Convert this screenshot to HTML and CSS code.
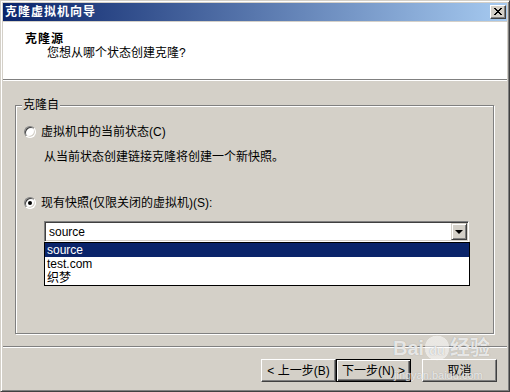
FILE: index.html
```html
<!DOCTYPE html>
<html lang="zh-CN">
<head>
  <meta charset="UTF-8" />
  <title>克隆虚拟机向导</title>
  <link rel="stylesheet" href="styles.css">
</head>
<body>
  <div class="window">
    <!-- Title bar -->
    <div class="titlebar">
      <span class="title">克隆虚拟机向导</span>
      <span class="close-btn">
        <svg width="8" height="7" viewBox="0 0 8 7" shape-rendering="crispEdges">
          <path d="M0 0h2v1H0zM6 0h2v1H6zM1 1h2v1H1zM5 1h2v1H5zM2 2h4v1H2zM3 3h2v1H3zM2 4h4v1H2zM1 5h2v1H1zM5 5h2v1H5zM0 6h2v1H0zM6 6h2v1H6z" fill="#000"/>
        </svg>
      </span>
    </div>

    <div class="client">
      <!-- Header -->
      <div class="header">
        <div class="header-title">克隆源</div>
        <div class="header-sub">您想从哪个状态创建克隆?</div>
      </div>

      <!-- Body -->
      <div class="body">
        <fieldset class="group">
          <legend>克隆自</legend>
          <div class="group-inner">
            <div class="option">
              <span class="radio"></span>
              <span>虚拟机中的当前状态(C)</span>
            </div>
            <div class="desc">从当前状态创建链接克隆将创建一个新快照。</div>
            <div class="option option-2">
              <span class="radio checked"></span>
              <span>现有快照(仅限关闭的虚拟机)(S):</span>
            </div>
            <div class="combo">
              <span class="combo-text">source</span>
              <span class="combo-btn"><span class="arrow"></span></span>
              <ul class="combo-list">
                <li class="selected">source</li>
                <li>test.com</li>
                <li>织梦</li>
              </ul>
            </div>
          </div>
        </fieldset>
      </div>

      <div class="separator"></div>

      <!-- Buttons -->
      <div class="buttons">
        <button class="btn">&lt; 上一步(B)</button>
        <button class="btn default">下一步(N) &gt;</button>
        <button class="btn cancel">取消</button>
      </div>

      <div class="watermark">
        <span class="wm-logo">Bai<span class="wm-paw">du</span>经验</span>
        <span class="wm-url">jingyan.baidu.com</span>
      </div>
    </div>
  </div>
</body>
</html>
```

FILE: styles.css
```css
body {
  margin: 0;
  font-family: "Liberation Sans", "Noto Sans CJK SC", sans-serif;
  font-size: 12px;
  line-height: 14px;
  color: #000;
  background: #d4d0c8;
}
.window {
  position: relative;
  width: 510px;
  height: 392px;
  box-sizing: border-box;
  border: 1px solid;
  border-color: #d4d0c8 #404040 #404040 #d4d0c8;
  box-shadow: inset 1px 1px 0 #fff, inset -1px -1px 0 #808080;
  padding: 2px;
  background: #d4d0c8;
  display: flex;
  flex-direction: column;
}
.titlebar {
  height: 18px;
  flex: none;
  display: flex;
  align-items: center;
  justify-content: space-between;
  padding: 0 1px 0 2px;
  background: linear-gradient(to right, #0a246a, #a6caf0);
  margin-bottom: 1px;
}
.title {
  color: #fff;
  font-weight: bold;
  letter-spacing: 1px;
  line-height: 18px;
}
.close-btn {
  width: 16px;
  height: 14px;
  box-sizing: border-box;
  border: 1px solid;
  border-color: #fff #404040 #404040 #fff;
  box-shadow: inset -1px -1px 0 #808080;
  background: #d4d0c8;
  display: flex;
  align-items: center;
  justify-content: center;
  padding-bottom: 1px;
}
.client {
  flex: 1;
  display: flex;
  flex-direction: column;
}
.header {
  height: 58px;
  flex: none;
  box-sizing: border-box;
  background: #fff;
  border-bottom: 1px solid #808080;
  padding: 10px 0 0 22px;
}
.header-title {
  font-weight: bold;
  letter-spacing: 1px;
}
.header-sub {
  padding-left: 22px;
}
.body {
  flex: 1;
  display: flex;
  flex-direction: column;
  border-top: 1px solid #fff;
}
.group {
  flex: 1;
  margin: 17px 13px 12px 12px;
  padding: 0;
  min-width: 0;
  border: 1px solid #808080;
  box-shadow: inset 1px 1px 0 #fff, 1px 1px 0 #fff;
}
.group legend {
  margin-left: 6px;
  padding: 0 1px;
  line-height: 14px;
  background: #d4d0c8;
}
.group-inner {
  padding: 13px 0 0 8px;
}
.option {
  display: flex;
  align-items: center;
  gap: 5px;
  height: 14px;
}
.option-2 {
  margin-top: 32px;
}
.desc {
  margin-top: 11px;
  padding-left: 20px;
}
.radio {
  position: relative;
  width: 12px;
  height: 12px;
  box-sizing: border-box;
  border-radius: 50%;
  background: #fff;
  border: 1px solid;
  border-color: #808080 #fff #fff #808080;
  box-shadow: inset 1px 1px 0 #404040, inset -1px -1px 0 #d4d0c8;
}
.radio.checked::after {
  content: "";
  position: absolute;
  left: 3px;
  top: 3px;
  width: 4px;
  height: 4px;
  border-radius: 50%;
  background: #000;
}
.combo {
  position: relative;
  margin: 11px 0 0 20px;
  width: 425px;
  height: 21px;
  box-sizing: border-box;
  background: #fff;
  border: 1px solid;
  border-color: #808080 #fff #fff #808080;
  box-shadow: inset 1px 1px 0 #404040, inset -1px -1px 0 #d4d0c8;
  display: flex;
  align-items: center;
  justify-content: space-between;
  padding: 1px;
}
.combo-text {
  padding-left: 3px;
}
.combo-btn {
  width: 16px;
  height: 17px;
  box-sizing: border-box;
  background: #d4d0c8;
  border: 1px solid;
  border-color: #d4d0c8 #404040 #404040 #d4d0c8;
  box-shadow: inset 1px 1px 0 #fff, inset -1px -1px 0 #808080;
  display: flex;
  align-items: center;
  justify-content: center;
}
.arrow {
  width: 0;
  height: 0;
  border-left: 4px solid transparent;
  border-right: 4px solid transparent;
  border-top: 4px solid #000;
  margin-top: 1px;
}
.combo-list {
  position: absolute;
  left: -1px;
  top: 20px;
  width: 426px;
  margin: 0;
  padding: 0;
  list-style: none;
  box-sizing: border-box;
  background: #fff;
  border: 1px solid #000;
}
.combo-list li {
  height: 14px;
  line-height: 14px;
  padding-left: 2px;
}
.combo-list li.selected {
  background: #0a246a;
  color: #fff;
}
.separator {
  height: 1px;
  flex: none;
  background: #808080;
  border-bottom: 1px solid #fff;
}
.buttons {
  height: 41px;
  flex: none;
  box-sizing: border-box;
  display: flex;
  justify-content: flex-end;
  align-items: flex-start;
  padding: 11px 10px 0 0;
}
.btn {
  width: 75px;
  height: 23px;
  padding: 0;
  font: inherit;
  color: #000;
  background: #d4d0c8;
  border: 1px solid;
  border-color: #fff #404040 #404040 #fff;
  box-shadow: inset -1px -1px 0 #808080;
}
.btn.default {
  border-color: #000;
  box-shadow: inset 1px 1px 0 #fff, inset -1px -1px 0 #404040, inset -2px -2px 0 #808080;
}
.btn.cancel {
  margin-left: 11px;
}
.watermark {
  position: absolute;
  left: 392px;
  top: 326px;
  display: flex;
  flex-direction: column;
  align-items: flex-start;
  color: rgba(255, 255, 255, 0.75);
  text-shadow: 0 0 1px rgba(120, 120, 120, 0.6);
  pointer-events: none;
}
.wm-logo {
  font-size: 20px;
  line-height: 36px;
  font-weight: bold;
}
.wm-paw {
  display: inline-block;
  font-size: 13px;
  padding: 6px 4px 0;
  margin: 0 1px;
  border-radius: 50%;
  background: radial-gradient(circle, rgba(255,255,255,0.5) 50%, transparent 52%);
}
.wm-url {
  font-size: 11px;
  line-height: 12px;
  padding-left: 1px;
}
```
